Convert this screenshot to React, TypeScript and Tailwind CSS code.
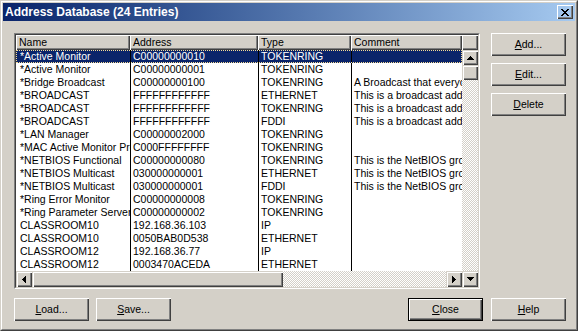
import React from 'react';

const raised =
  'shadow-[inset_1px_1px_#fff,inset_-1px_-1px_#404040,inset_-2px_-2px_#808080]';
const scrollRaised =
  'shadow-[inset_1px_1px_#d4d0c8,inset_2px_2px_#fff,inset_-1px_-1px_#404040,inset_-2px_-2px_#808080]';
const checker =
  'bg-[repeating-conic-gradient(#d4d0c8_0_25%,#ffffff_0_50%)] bg-[length:2px_2px]';

interface Entry {
  name: string;
  address: string;
  type: string;
  comment: string;
}

const entries: Entry[] = [
  { name: '*Active Monitor', address: 'C00000000010', type: 'TOKENRING', comment: '' },
  { name: '*Active Monitor', address: 'C00000000001', type: 'TOKENRING', comment: '' },
  { name: '*Bridge Broadcast', address: 'C00000000100', type: 'TOKENRING', comment: 'A Broadcast that everyone receives' },
  { name: '*BROADCAST', address: 'FFFFFFFFFFFF', type: 'ETHERNET', comment: 'This is a broadcast address' },
  { name: '*BROADCAST', address: 'FFFFFFFFFFFF', type: 'TOKENRING', comment: 'This is a broadcast address' },
  { name: '*BROADCAST', address: 'FFFFFFFFFFFF', type: 'FDDI', comment: 'This is a broadcast address' },
  { name: '*LAN Manager', address: 'C00000002000', type: 'TOKENRING', comment: '' },
  { name: '*MAC Active Monitor Present', address: 'C000FFFFFFFF', type: 'TOKENRING', comment: '' },
  { name: '*NETBIOS Functional', address: 'C00000000080', type: 'TOKENRING', comment: 'This is the NetBIOS group address' },
  { name: '*NETBIOS Multicast', address: '030000000001', type: 'ETHERNET', comment: 'This is the NetBIOS group address' },
  { name: '*NETBIOS Multicast', address: '030000000001', type: 'FDDI', comment: 'This is the NetBIOS group address' },
  { name: '*Ring Error Monitor', address: 'C00000000008', type: 'TOKENRING', comment: '' },
  { name: '*Ring Parameter Server', address: 'C00000000002', type: 'TOKENRING', comment: '' },
  { name: 'CLASSROOM10', address: '192.168.36.103', type: 'IP', comment: '' },
  { name: 'CLASSROOM10', address: '0050BAB0D538', type: 'ETHERNET', comment: '' },
  { name: 'CLASSROOM12', address: '192.168.36.77', type: 'IP', comment: '' },
  { name: 'CLASSROOM12', address: '0003470ACEDA', type: 'ETHERNET', comment: '' },
];

// little pixel triangles for the scroll buttons
const Arrow: React.FC<{ dir: 'up' | 'down' | 'left' | 'right' }> = ({ dir }) => {
  const steps = [1, 3, 5, 7];
  if (dir === 'up' || dir === 'down') {
    return (
      <svg width="7" height="4" shapeRendering="crispEdges">
        {steps.map((w, i) => (
          <rect key={i} x={(7 - w) / 2} y={dir === 'up' ? i : 3 - i} width={w} height={1} fill="#000" />
        ))}
      </svg>
    );
  }
  return (
    <svg width="4" height="7" shapeRendering="crispEdges">
      {steps.map((h, i) => (
        <rect key={i} y={(7 - h) / 2} x={dir === 'left' ? i : 3 - i} height={h} width={1} fill="#000" />
      ))}
    </svg>
  );
};

const CloseGlyph = () => {
  const rows = ['11000011', '01100110', '00111100', '00011000', '00111100', '01100110', '11000011'];
  return (
    <svg width="8" height="7" shapeRendering="crispEdges">
      {rows.flatMap((r, y) =>
        r.split('').map((c, x) =>
          c === '1' ? <rect key={`${x}-${y}`} x={x} y={y} width={1} height={1} fill="#000" /> : null
        )
      )}
    </svg>
  );
};

const Button: React.FC<{ hot: string; rest: string; isDefault?: boolean; className?: string }> = ({
  hot,
  rest,
  isDefault,
  className = '',
}) =>
  isDefault ? (
    <div className={`w-[75px] h-[23px] border border-black ${className}`}>
      <div className={`w-full h-full flex items-center justify-center ${raised}`}>
        <span>
          <span className="underline">{hot}</span>
          {rest}
        </span>
      </div>
    </div>
  ) : (
    <div className={`w-[75px] h-[23px] flex items-center justify-center ${raised} ${className}`}>
      <span>
        <span className="underline">{hot}</span>
        {rest}
      </span>
    </div>
  );

const HeaderCell: React.FC<{ label?: string; className: string }> = ({ label, className }) => (
  <div className={`h-[15px] leading-[15px] pl-[3px] overflow-hidden whitespace-nowrap ${raised} ${className}`}>
    {label}
  </div>
);

export default function App() {
  return (
    <div className="w-[578px] h-[331px] bg-[#d4d0c8] text-black text-[10.5px] font-['Liberation_Sans',Arial,sans-serif] border border-t-[#d4d0c8] border-l-[#d4d0c8] border-b-[#404040] border-r-[#404040]">
      <div className="h-full p-[1px] flex flex-col border border-t-white border-l-white border-b-[#808080] border-r-[#808080]">
        {/* Title bar */}
        <div className="h-[18px] flex items-center pl-[2px] pr-[2px] bg-gradient-to-r from-[#0a246a] to-[#a6caf0]">
          <span className="text-white font-bold text-[12px]">Address Database (24 Entries)</span>
          <div className={`ml-auto w-[16px] h-[14px] flex items-center justify-center ${raised}`}>
            <CloseGlyph />
          </div>
        </div>

        {/* List + side buttons */}
        <div className="flex pl-[11px] pt-[12px]">
          <div className="w-[466px] h-[256px] border border-t-[#808080] border-l-[#808080] border-b-white border-r-white">
            <div className="w-full h-full flex border border-t-[#404040] border-l-[#404040] border-b-[#d4d0c8] border-r-[#d4d0c8]">
              <div className="w-[446px] flex flex-col">
                <div className="flex">
                  <HeaderCell label="Name" className="w-[114px]" />
                  <HeaderCell label="Address" className="w-[128px]" />
                  <HeaderCell label="Type" className="w-[93px]" />
                  <HeaderCell label="Comment" className="w-[111px]" />
                </div>
                <div className="h-[221px] bg-white overflow-hidden">
                  {entries.map((e, i) => {
                    const sel = i === 0;
                    return (
                      <div
                        key={i}
                        className={`flex h-[13px] leading-[13px] whitespace-nowrap ${
                          sel ? 'bg-[#0a246a] text-white outline-1 outline-dotted outline-[#f5db95] -outline-offset-1' : ''
                        }`}
                      >
                        <div className="w-[114px] pl-[4px] overflow-hidden">{e.name}</div>
                        <div className="w-[128px] pl-[2px] overflow-hidden border-l border-black">{e.address}</div>
                        <div className="w-[93px] pl-[2px] overflow-hidden border-l border-black">{e.type}</div>
                        <div className="w-[111px] pl-[2px] overflow-hidden border-l border-black">{e.comment}</div>
                      </div>
                    );
                  })}
                </div>
                {/* Horizontal scrollbar */}
                <div className="h-[16px] flex">
                  <div className={`w-[16px] flex items-center justify-center ${scrollRaised}`}>
                    <Arrow dir="left" />
                  </div>
                  <div className={`w-[251px] ${scrollRaised}`} />
                  <div className={`flex-1 ${checker}`} />
                  <div className={`w-[16px] flex items-center justify-center ${scrollRaised}`}>
                    <Arrow dir="right" />
                  </div>
                </div>
              </div>

              {/* Vertical scrollbar */}
              <div className="w-[16px] flex flex-col">
                <HeaderCell className="w-[16px]" />
                <div className={`h-[15px] flex items-center justify-center ${scrollRaised}`}>
                  <Arrow dir="up" />
                </div>
                <div className={`h-[15px] ${scrollRaised}`} />
                <div className={`flex-1 ${checker}`} />
                <div className={`h-[16px] flex items-center justify-center ${scrollRaised}`}>
                  <Arrow dir="down" />
                </div>
              </div>
            </div>
          </div>

          <div className="ml-[11px] flex flex-col gap-[7px]">
            <Button hot="A" rest="dd..." />
            <Button hot="E" rest="dit..." />
            <Button hot="D" rest="elete" />
          </div>
        </div>

        {/* Bottom buttons */}
        <div className="flex pl-[11px] pr-[9px] mt-[9px]">
          <Button hot="L" rest="oad..." />
          <Button hot="S" rest="ave..." className="ml-[7px]" />
          <Button hot="C" rest="lose" isDefault className="ml-auto" />
          <Button hot="H" rest="elp" className="ml-[8px]" />
        </div>
      </div>
    </div>
  );
}
